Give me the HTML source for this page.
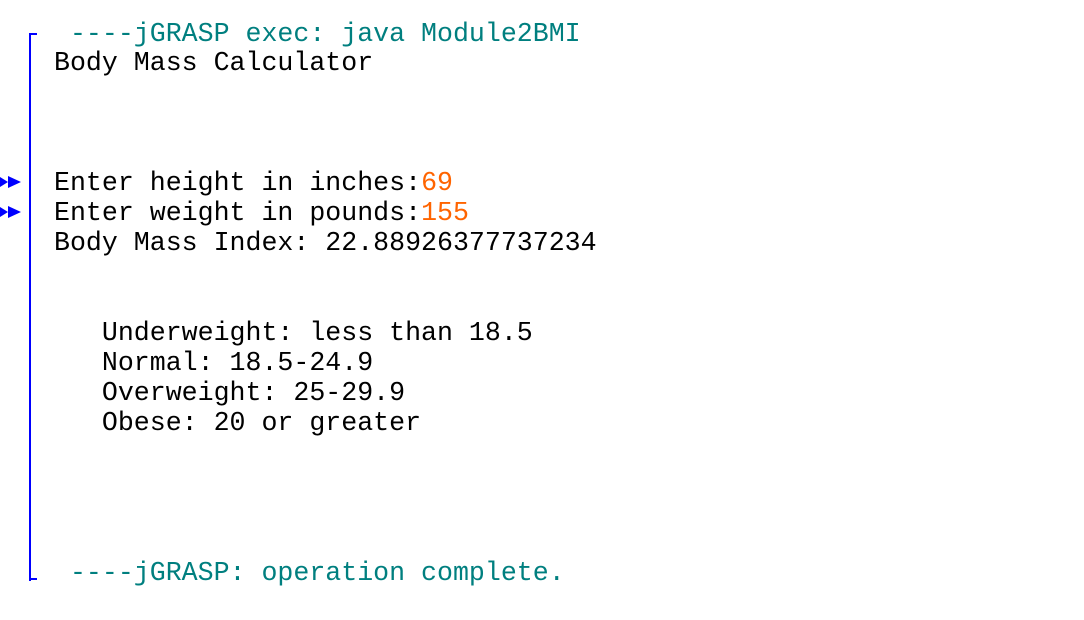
<!DOCTYPE html>
<html><head><style>
body{margin:0;width:1084px;height:620px;background:#fff;position:relative;overflow:hidden}
.l{position:absolute;left:54px;font-family:"Liberation Mono","Courier New",monospace;font-size:26.6px;line-height:30px;height:30px;white-space:pre;color:#000;margin-top:1px}
.t{color:#007f7f}.o{color:#ff6400}
.b{position:absolute;background:#0000ff}
</style></head><body>
<div class="b" style="left:29px;top:33px;width:2px;height:548px"></div>
<div class="b" style="left:29px;top:33px;width:8px;height:2px"></div>
<div class="b" style="left:29px;top:578px;width:8px;height:2px"></div>
<svg style="position:absolute;left:0;top:174px" width="24" height="46">
<polygon points="0,3 8,8 0,13" fill="#0000ff"/><polygon points="8,2 21,8 8,14" fill="#0000ff"/>
<polygon points="0,33 8,38 0,43" fill="#0000ff"/><polygon points="8,32 21,38 8,44" fill="#0000ff"/>
</svg>
<div class="l t" style="top:18px"> ----jGRASP exec: java Module2BMI</div>
<div class="l" style="top:47px">Body Mass Calculator</div>
<div class="l" style="top:167px">Enter height in inches:<span class="o">69</span></div>
<div class="l" style="top:197px">Enter weight in pounds:<span class="o">155</span></div>
<div class="l" style="top:227px">Body Mass Index: 22.88926377737234</div>
<div class="l" style="top:317px">   Underweight: less than 18.5</div>
<div class="l" style="top:347px">   Normal: 18.5-24.9</div>
<div class="l" style="top:377px">   Overweight: 25-29.9</div>
<div class="l" style="top:407px">   Obese: 20 or greater</div>
<div class="l t" style="top:557px"> ----jGRASP: operation complete.</div>
</body></html>
